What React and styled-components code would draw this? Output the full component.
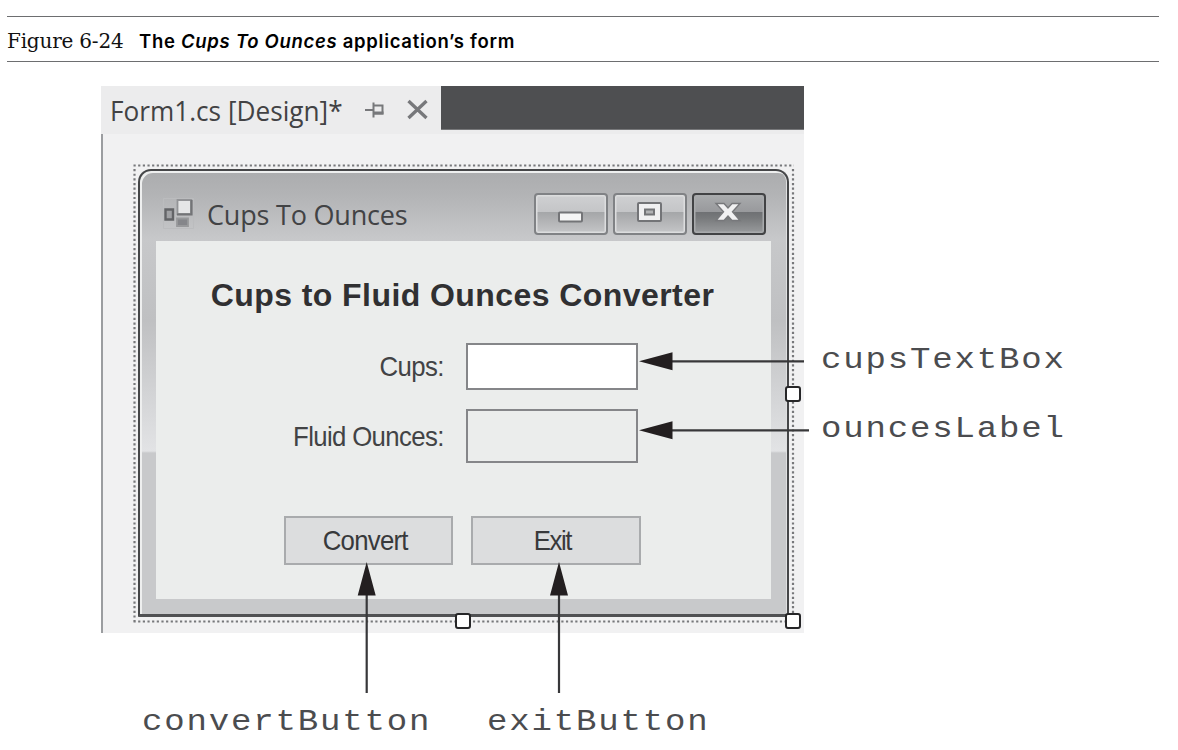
import React from "react";
import styled, { createGlobalStyle } from "styled-components";

const GlobalStyle = createGlobalStyle`
  * { box-sizing: border-box; }
  body { margin: 0; background: #fff; overflow: hidden; }
`;

const Page = styled.main`
  width: 1178px;
  height: 750px;
  padding: 16px 19px 0 7px;
  background: #fff;
`;

const Caption = styled.header`
  display: flex;
  align-items: baseline;
  height: 46px;
  padding: 11px 0 0;
  border-top: 1px solid #6d6e70;
  border-bottom: 1px solid #6d6e70;
  white-space: nowrap;
`;

const FigureNumber = styled.span`
  width: 132px;
  font: 20px/26px "DejaVu Serif", serif;
  letter-spacing: -0.2px;
  color: #111;
`;

const FigureTitle = styled.span`
  font: 600 18.5px/26px Inter, sans-serif;
  letter-spacing: 0.7px;
  color: #000;
`;

const Figure = styled.section`
  position: relative;
  display: grid;
  grid-template-columns: 703px 1fr;
  grid-template-rows: 547px auto;
  margin: 24px 0 0 94px;
`;

const Designer = styled.div`
  display: flex;
  flex-direction: column;
  background: #f1f1f2;
`;

const TabStrip = styled.div`
  display: flex;
  height: 48px;
  background: #ececed;
`;

const Tab = styled.div`
  display: flex;
  align-items: center;
  width: 340px;
  height: 48px;
  padding-left: 9px;
`;

const TabName = styled.span`
  width: 254px;
  padding-top: 1px;
  font: 27px/36px "Open Sans", sans-serif;
  color: #424244;
  white-space: nowrap;
  transform: scaleX(0.97);
  transform-origin: left;
`;

const TabIcons = styled.svg`
  width: 70px;
  height: 28px;
  flex: none;
`;

const TabRest = styled.div`
  flex: 1;
  height: 44px;
  background: #4e4f51;
  border-bottom: 1px solid #77787a;
`;

const Surface = styled.div`
  position: relative;
  flex: 1;
  padding: 35px 16px 16px 35px;
  border-left: 2px solid #9b9da0;
`;

const SelectionOutline = styled.svg`
  position: absolute;
  left: -2px;
  top: 0;
  width: 703px;
  height: 499px;
`;

const Handle = styled.i`
  position: absolute;
  left: ${(p) => p.$x}px;
  top: ${(p) => p.$y}px;
  width: 16px;
  height: 16px;
  background: #fff;
  border: 2px solid #262628;
  border-radius: 3px;
`;

const FormWindow = styled.div`
  display: flex;
  flex-direction: column;
  width: 651px;
  height: 448px;
  border: 2px solid #454648;
  border-bottom: 3px solid #505153;
  border-radius: 13px 13px 1px 1px;
  box-shadow: inset 2px 2px 0 #eeefef, inset -1px 0 0 #dfe0e1;
  background:
    linear-gradient(#abacae 0, #b3b4b6 25px, #c7c8ca 68px, #bfc0c2 150px, #e2e3e5 280px, #c8c9cb 282px, #c8c9cb 100%);
`;

const TitleBar = styled.div`
  display: flex;
  align-items: center;
  height: 70px;
  padding: 16px 21px 0 23px;
`;

const FormIcon = styled.svg`
  width: 32px;
  height: 32px;
`;

const Title = styled.span`
  flex: 1;
  padding: 1px 0 0 12px;
  font: 27px/34px "Open Sans", sans-serif;
  letter-spacing: -0.2px;
  color: #424345;
  white-space: nowrap;
`;

const WindowButtons = styled.div`
  display: flex;
  gap: 5px;
`;

const WindowButton = styled.div`
  display: flex;
  align-items: center;
  justify-content: center;
  width: 74px;
  height: 42px;
  border: 2px solid ${(p) => (p.$dark ? "#424345" : "#808285")};
  border-radius: 4px;
  box-shadow: inset 0 0 0 1.5px ${(p) => (p.$dark ? "#a9abad" : "#dcddde")};
  background: ${(p) =>
    p.$dark
      ? "linear-gradient(#a9abad, #98999c 45%, #6f7174 46%, #77797b 60%, #999b9d)"
      : "linear-gradient(#cfd0d2, #c4c5c7 45%, #a5a7a9 46%, #adaeb0 60%, #c5c6c8)"};
`;

const Glyph = styled.svg`
  width: 36px;
  height: 32px;
`;

const Client = styled.div`
  display: flex;
  flex-direction: column;
  align-items: center;
  width: 615px;
  height: 358px;
  margin-left: 16px;
  padding-top: 34px;
  background: #ebedec;
`;

const Heading = styled.h1`
  margin: 0;
  padding-right: 2px;
  font: bold 32px/40px "Liberation Sans", sans-serif;
  letter-spacing: 0.43px;
  color: #303032;
  white-space: nowrap;
`;

const Fields = styled.div`
  display: grid;
  grid-template-columns: 288px 172px;
  grid-template-rows: 47px 54px;
  column-gap: 22px;
  row-gap: 19px;
  align-self: flex-start;
  align-items: center;
  margin-top: 28px;
`;

const FieldLabel = styled.span`
  justify-self: end;
  padding-top: 1px;
  font: 28px/32px "Liberation Sans", sans-serif;
  letter-spacing: -0.7px;
  color: #424345;
  transform: scaleX(0.92);
  transform-origin: right;
  white-space: nowrap;
`;

const FieldBox = styled.div`
  height: 100%;
  border: 2px solid #858689;
  background: ${(p) => (p.$filled ? "#fff" : "transparent")};
`;

const Buttons = styled.div`
  display: flex;
  gap: 18px;
  margin-top: 53px;
  padding-right: 3px;
`;

const Button = styled.div`
  display: flex;
  align-items: center;
  justify-content: center;
  width: 169.5px;
  height: 49px;
  padding-top: 1px;
  padding-right: ${(p) => p.$shift || 7}px;
  border: 2px solid #a9abad;
  background: #dcddde;
`;

const ButtonText = styled.span`
  font: 28px/32px "Liberation Sans", sans-serif;
  letter-spacing: ${(p) => p.$tracking || -0.8}px;
  color: #38393b;
  transform: scaleX(0.92);
`;

const CodeName = styled.span`
  display: block;
  width: fit-content;
  font: 30px/40px "Liberation Mono", monospace;
  letter-spacing: 1.6px;
  color: #4b4c4f;
  white-space: nowrap;
  transform: scaleX(1.135);
  transform-origin: left;
`;

const SideNames = styled.div`
  display: flex;
  flex-direction: column;
  gap: 29px;
  padding: 254px 0 0 17px;
`;

const BottomNames = styled.div`
  display: grid;
  grid-column: 1 / -1;
  grid-template-columns: 345px auto;
  padding: 69px 0 0 41px;
`;

const Callouts = styled.svg`
  position: absolute;
  left: 0;
  top: 0;
  width: 720px;
  height: 610px;
`;

export default function App() {
  return (
    <Page>
      <GlobalStyle />
      <Caption>
        <FigureNumber>Figure 6-24</FigureNumber>
        <FigureTitle>
          The <em>Cups To Ounces</em> application’s form
        </FigureTitle>
      </Caption>
      <Figure>
        <Designer>
          <TabStrip>
            <Tab>
              <TabName>Form1.cs [Design]*</TabName>
              <TabIcons viewBox="0 0 70 28" fill="none" stroke="#77787b">
                <path d="M1 14h8M9.5 6.5v15M9.5 9.5h9v8h-9" strokeWidth="2" />
                <path d="M9.5 17h10" strokeWidth="3" />
                <path d="M44.5 5l18 17M62.5 5l-18 17" strokeWidth="3.3" />
              </TabIcons>
            </Tab>
            <TabRest />
          </TabStrip>
          <Surface>
            <SelectionOutline viewBox="0 0 703 499">
              <path
                d="M32.5 31.5H693M33.5 35V488M692 35V488M32.5 487.5H693"
                fill="none"
                stroke="#77787b"
                strokeWidth="2.2"
                strokeDasharray="2.2 2.45"
              />
            </SelectionOutline>
            <FormWindow>
              <TitleBar>
                <FormIcon viewBox="0 0 32 32">
                  <path d="M.5 .5h30v30H.5z" fill="none" stroke="#bbbcbe" />
                  <path d="M2.5 11.5h7.500v10H2.500z" fill="#a0a1a4" stroke="#636467" strokeWidth="2.400" />
                  <path d="M14.500 2h13.500v14H14.500z" fill="#e5e6e7" stroke="#939497" strokeWidth="1.800" />
                  <path d="M28.500 2v14.500H14" fill="none" stroke="#737477" strokeWidth="2.200" />
                  <path d="M14 20.500h11v7.500H14z" fill="#85868a" stroke="#98999b" strokeWidth="1.800" />
                </FormIcon>
                <Title>Cups To Ounces</Title>
                <WindowButtons>
                  <WindowButton>
                    <Glyph viewBox="0 0 36 32">
                      <rect x="6" y="14.5" width="23" height="9" rx="1" fill="#f5f5f5" stroke="#737477" strokeWidth="2" />
                    </Glyph>
                  </WindowButton>
                  <WindowButton>
                    <Glyph viewBox="0 0 36 32">
                      <rect x="6" y="5" width="23" height="18" rx="1" fill="#f0f0f1" stroke="#737477" strokeWidth="2" />
                      <rect x="13" y="11.5" width="9" height="5" fill="#b1b2b4" stroke="#737477" strokeWidth="2" />
                    </Glyph>
                  </WindowButton>
                  <WindowButton $dark>
                    <Glyph viewBox="0 0 36 32">
                      <path
                        d="M5 5.5h8l4 4.5 4-4.5h8l-7.5 8.3 7.5 8.7h-8l-4-4.5-4 4.5H5l7.5-8.7z"
                        fill="#f1f1f2"
                        stroke="#77787b"
                        strokeWidth="1.4"
                      />
                    </Glyph>
                  </WindowButton>
                </WindowButtons>
              </TitleBar>
              <Client>
                <Heading>Cups to Fluid Ounces Converter</Heading>
                <Fields>
                  <FieldLabel>Cups:</FieldLabel>
                  <FieldBox $filled />
                  <FieldLabel>Fluid Ounces:</FieldLabel>
                  <FieldBox />
                </Fields>
                <Buttons>
                  <Button>
                    <ButtonText>Convert</ButtonText>
                  </Button>
                  <Button $shift={6}>
                    <ButtonText $tracking={-1.5}>Exit</ButtonText>
                  </Button>
                </Buttons>
              </Client>
            </FormWindow>
            <Handle $x={682} $y={252} />
            <Handle $x={352} $y={479} />
            <Handle $x={682} $y={479} />
          </Surface>
        </Designer>
        <SideNames>
          <CodeName>cupsTextBox</CodeName>
          <CodeName>ouncesLabel</CodeName>
        </SideNames>
        <BottomNames>
          <CodeName>convertButton</CodeName>
          <CodeName>exitButton</CodeName>
        </BottomNames>
        <Callouts viewBox="0 0 720 610">
          <path d="M560 275.3H703M560 344.3H708M265.7 500V607M458 500V607" stroke="#38383a" strokeWidth="2.2" />
          <path
            d="M538 275.3l33.5-9v18zM538 344.3l33.5-9v18zM265.7 476l-9 33.5h18zM458 476l-9 33.5h18z"
            fill="#231f20"
          />
        </Callouts>
      </Figure>
    </Page>
  );
}
